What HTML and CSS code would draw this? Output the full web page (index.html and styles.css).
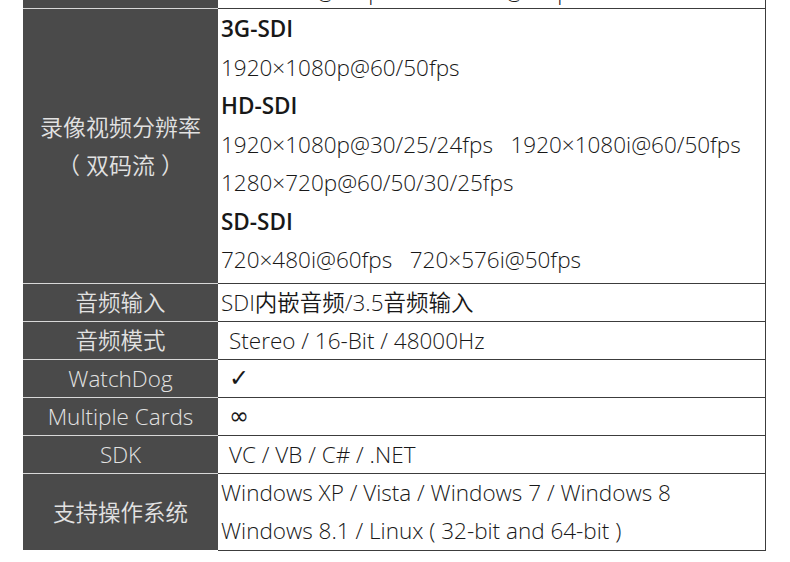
FILE: index.html
```html
<!DOCTYPE html>
<html lang="zh">
<head>
<meta charset="utf-8">
<link rel="stylesheet" href="styles.css">
</head>
<body>
<div class="page">
  <div class="spec">
    <div class="label partial">&nbsp;</div>
    <div class="value partial">720×480i@60fps&nbsp;&nbsp; 720×576i@50fps</div>

    <div class="label video-label"><span>录像视频分辨率</span><span>（ 双码流 ）</span></div>
    <div class="value video">
      <div class="std">3G-SDI</div>
      <div>1920×1080p@60/50fps</div>
      <div class="std">HD-SDI</div>
      <div>1920×1080p@30/25/24fps&nbsp;&nbsp; 1920×1080i@60/50fps</div>
      <div>1280×720p@60/50/30/25fps</div>
      <div class="std">SD-SDI</div>
      <div>720×480i@60fps&nbsp;&nbsp; 720×576i@50fps</div>
    </div>

    <div class="label">音频输入</div>
    <div class="value">SDI内嵌音频/3.5音频输入</div>

    <div class="label">音频模式</div>
    <div class="value indent">Stereo / 16-Bit / 48000Hz</div>

    <div class="label">WatchDog</div>
    <div class="value indent sym">✓</div>

    <div class="label">Multiple Cards</div>
    <div class="value indent sym">∞</div>

    <div class="label">SDK</div>
    <div class="value indent">VC / VB / C# / .NET</div>

    <div class="label last">支持操作系统</div>
    <div class="value os">
      <div>Windows XP / Vista / Windows 7 / Windows 8</div>
      <div>Windows 8.1 / Linux ( 32-bit and 64-bit )</div>
    </div>
  </div>
</div>
</body>
</html>
```

FILE: styles.css
```css
html, body {
  margin: 0;
  padding: 0;
  background: #ffffff;
}

.page {
  padding-left: 23px;
  height: 562px;
  overflow: hidden;
}

.spec {
  margin-top: -29px;
  display: grid;
  grid-template-columns: 195px 548px;
  font-family: "Open Sans", "Noto Sans CJK SC", sans-serif;
  font-size: 22.5px;
  font-weight: 350;
}

.label {
  background: #4a4a4a;
  color: #e2e2e2;
  border-bottom: 1px solid #d8d8d8;
  display: flex;
  flex-direction: column;
  align-items: center;
  justify-content: center;
  line-height: 37px;
  text-align: center;
  font-size: 22.5px;
}

.label.last {
  border-bottom: 1px solid #ffffff;
}

.video-label {
  line-height: 38px;
  font-size: 23px;
}

.value {
  color: #181818;
  border-bottom: 1px solid #3c3c3c;
  border-right: 1px solid #3c3c3c;
  padding-left: 3px;
  line-height: 37px;
  white-space: nowrap;
}

.value.partial {
  line-height: 32px;
  padding-top: 5px;
}

.value.indent {
  padding-left: 11px;
}

.value.sym {
  font-family: "DejaVu Sans", "Open Sans", sans-serif;
  font-size: 24px;
  font-weight: 400;
}

.value.video {
  line-height: 38.5px;
  padding-top: 1px;
  padding-bottom: 3.5px;
}

.std {
  font-weight: 550;
}

.value.os {
  line-height: 38px;
}
```
